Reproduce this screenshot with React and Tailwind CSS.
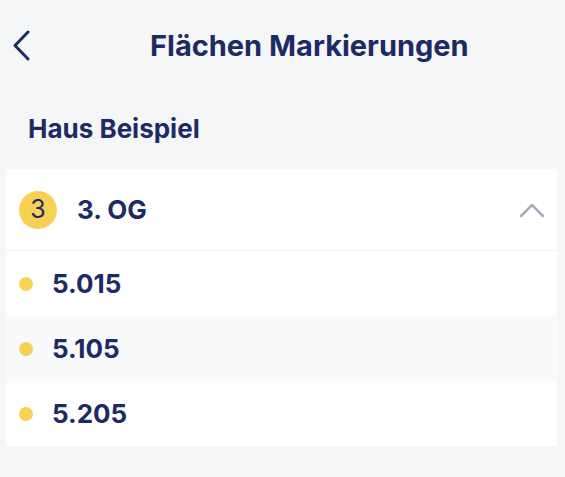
import React from "react";

const NAVY = "text-[#1d2b64]";

const rooms = ["5.015", "5.105", "5.205"];

export default function App() {
  return (
    <div className="min-h-[477px] w-[565px] bg-[#f5f6f8] font-['Inter','Liberation_Sans',sans-serif]">
      {/* header */}
      <div className="flex h-[90px] items-center pl-[12px]">
        <button className="flex h-[32px] w-[20px] items-center">
          <svg width="18" height="31" viewBox="0 0 18 31" fill="none">
            <path
              d="M16 2 L3 15.5 L16 29"
              stroke="#1d2b64"
              strokeWidth="3"
              strokeLinecap="round"
              strokeLinejoin="round"
            />
          </svg>
        </button>
        <h1 className={`ml-[118px] text-[29px] font-bold leading-none ${NAVY}`}>
          Flächen Markierungen
        </h1>
      </div>

      {/* section title */}
      <div className={`h-[79px] pl-[28px] pt-[26px] text-[26px] font-bold leading-none ${NAVY}`}>
        Haus Beispiel
      </div>

      {/* card */}
      <div className="ml-[6px] mr-[8px] bg-white">
        <div className="flex h-[82px] items-center border-b border-[#f0f1f4] pl-[13px] pr-[12px]">
          <div className={`flex h-[38px] w-[38px] items-center justify-center rounded-full bg-[#f8d154] text-[25px] ${NAVY}`}>
            3
          </div>
          <span className={`ml-[20px] text-[26px] font-bold ${NAVY}`}>3. OG</span>
          <svg className="ml-auto" width="26" height="16" viewBox="0 0 26 16" fill="none">
            <path
              d="M2 14 L13 3 L24 14"
              stroke="#a3adbf"
              strokeWidth="2.5"
              strokeLinecap="round"
              strokeLinejoin="round"
            />
          </svg>
        </div>
        {rooms.map((r, i) => (
          <div
            key={r}
            className={`flex h-[65px] items-center pl-[13px] ${i === 1 ? "bg-[#f9fafc]" : "bg-white"}`}
          >
            <span className="h-[14px] w-[14px] rounded-full bg-[#f8d154]" />
            <span className={`ml-[19px] text-[26px] font-bold ${NAVY}`}>{r}</span>
          </div>
        ))}
      </div>
    </div>
  );
}
